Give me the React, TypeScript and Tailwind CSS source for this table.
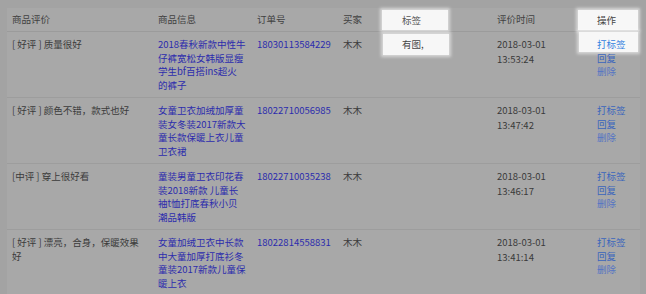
import React from "react";

type Row = {
  comment: string[];
  product: string[];
  order: string;
  buyer: string;
  tag?: string;
  date: string;
  time: string;
  highlight?: boolean;
};

const rows: Row[] = [
  {
    comment: ["[ 好评 ] 质量很好"],
    product: ["2018春秋新款中性牛", "仔裤宽松女韩版显瘦", "学生bf百搭ins超火", "的裤子"],
    order: "18030113584229",
    buyer: "木木",
    tag: "有图,",
    date: "2018-03-01",
    time: "13:53:24",
    highlight: true,
  },
  {
    comment: ["[ 好评 ] 颜色不错，款式也好"],
    product: ["女童卫衣加绒加厚童", "装女冬装2017新款大", "童长款保暖上衣儿童", "卫衣裙"],
    order: "18022710056985",
    buyer: "木木",
    date: "2018-03-01",
    time: "13:47:42",
  },
  {
    comment: ["[中评 ] 穿上很好看"],
    product: ["童装男童卫衣印花春", "装2018新款 儿童长", "袖t恤打底春秋小贝", "潮品韩版"],
    order: "18022710035238",
    buyer: "木木",
    date: "2018-03-01",
    time: "13:46:17",
  },
  {
    comment: ["[ 好评 ] 漂亮，合身，保暖效果", "好"],
    product: ["女童加绒卫衣中长款", "中大童加厚打底衫冬", "童装2017新款儿童保", "暖上衣"],
    order: "18022814558831",
    buyer: "木木",
    date: "2018-03-01",
    time: "13:41:14",
  },
];

const grid = "grid grid-cols-[146px_99px_86px_39px_115px_100px_1fr]";
const glow = "absolute bg-[#f7f7f7] shadow-[0_0_3px_2px_rgba(255,255,255,0.55)]";

export default function App() {
  return (
    <div
      className="w-[646px] h-[294px] overflow-hidden bg-[#a3a3a3] pl-[7px] pt-[8px] text-[9.5px] leading-[13.5px] text-[#3b3b3b]"
      style={{ fontFamily: '"Noto Sans CJK SC", "Noto Sans", sans-serif' }}
    >
      <div className="w-[633px] h-full bg-[#a8a8a8]">
        {/* header */}
        <div className={`${grid} h-[24px] items-center border-b border-[#9b9b9b] text-[#414141]`}>
          <div className="pl-[5px]">商品评价</div>
          <div className="pl-[5px]">商品信息</div>
          <div className="pl-[5px]">订单号</div>
          <div className="pl-[5px]">买家</div>
          <div className="relative h-full">
            <div className={`${glow} left-[5px] top-[2px] w-[66px] h-[20px]`} />
            <div className="relative pl-[25px] leading-[24px] text-[#555]">标签</div>
          </div>
          <div className="pl-[5px]">评价时间</div>
          <div className="relative h-full">
            <div className={`${glow} left-[-14px] top-[2px] w-[60px] h-[20px]`} />
            <div className="relative pl-[5px] leading-[24px] text-[#444]">操作</div>
          </div>
        </div>
        {rows.map((r, i) => (
          <div key={i} className={`${grid} h-[66px] border-b border-[#9d9d9d]`}>
            <div className="pl-[5px] pt-[6px]">
              {r.comment.map((c, j) => (
                <div key={j} className="whitespace-pre">{c}</div>
              ))}
            </div>
            <div className="pl-[5px] pt-[6px] text-[#2c2cad]">
              {r.product.map((c, j) => (
                <div key={j} className="whitespace-pre">{c}</div>
              ))}
            </div>
            <div className="pl-[5px] pt-[6px] text-[#2c2cad]">{r.order}</div>
            <div className="pl-[5px] pt-[6px]">{r.buyer}</div>
            <div className="relative">
              {r.highlight && (
                <div className={`${glow} left-[6px] top-[2px] w-[66px] h-[21px]`} />
              )}
              {r.tag && (
                <div className="relative pl-[25px] pt-[6px] text-[#444]">{r.tag}</div>
              )}
            </div>
            <div className="pl-[5px] pt-[6px] text-[#3a3a3a]">
              <div>{r.date}</div>
              <div className="mt-[1px]">{r.time}</div>
            </div>
            <div className="relative pt-[6px]">
              {r.highlight && (
                <div className={`${glow} left-[-13px] top-[0px] w-[59px] h-[20px]`} />
              )}
              <div className={`relative pl-[5px] ${r.highlight ? "text-[#3380e0]" : "text-[#3a65bd]"}`}>打标签</div>
              <div className="relative pl-[5px] text-[#3a65bd]">回复</div>
              <div className="relative pl-[5px] text-[#5474c4]">删除</div>
            </div>
          </div>
        ))}
      </div>
    </div>
  );
}
